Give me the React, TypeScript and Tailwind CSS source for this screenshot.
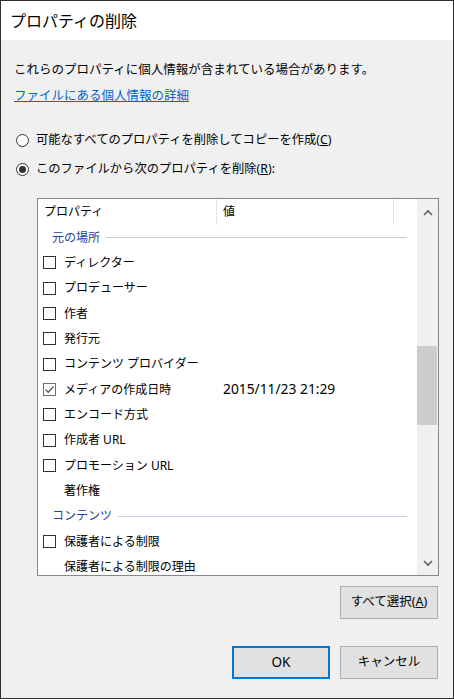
import React from 'react';

const FONT = "font-['Noto_Sans','Noto_Sans_CJK_JP',sans-serif]";

type Row =
  | { kind: 'group'; label: string }
  | { kind: 'item'; label: string; value?: string; checked?: boolean; noBox?: boolean };

const ROWS: Row[] = [
  { kind: 'group', label: '元の場所' },
  { kind: 'item', label: 'ディレクター' },
  { kind: 'item', label: 'プロデューサー' },
  { kind: 'item', label: '作者' },
  { kind: 'item', label: '発行元' },
  { kind: 'item', label: 'コンテンツ プロバイダー' },
  { kind: 'item', label: 'メディアの作成日時', value: '2015/11/23 21:29', checked: true },
  { kind: 'item', label: 'エンコード方式' },
  { kind: 'item', label: '作成者 URL' },
  { kind: 'item', label: 'プロモーション URL' },
  { kind: 'item', label: '著作権', noBox: true },
  { kind: 'group', label: 'コンテンツ' },
  { kind: 'item', label: '保護者による制限' },
  { kind: 'item', label: '保護者による制限の理由', noBox: true },
];

function CheckBox({ checked }: { checked?: boolean }) {
  return (
    <span
      className={`w-[13px] h-[13px] shrink-0 border bg-white flex items-center justify-center ${
        checked ? 'border-[#6d6d6d]' : 'border-[#333333]'
      }`}
    >
      {checked && (
        <svg width="11" height="11" viewBox="0 0 11 11">
          <polyline points="1.5,5.5 4.2,8.2 9.5,2.5" fill="none" stroke="#5a5a5a" strokeWidth="1.3" />
        </svg>
      )}
    </span>
  );
}

function Radio({ checked }: { checked?: boolean }) {
  return (
    <span className="w-[13px] h-[13px] shrink-0 rounded-full border border-[#333333] bg-white flex items-center justify-center">
      {checked && <span className="w-[7px] h-[7px] rounded-full bg-[#333333]" />}
    </span>
  );
}

function Chevron({ up }: { up?: boolean }) {
  return (
    <svg width="10" height="7" viewBox="0 0 10 7">
      <polyline
        points={up ? '1,6 5,2 9,6' : '1,1 5,5 9,1'}
        fill="none"
        stroke="#606060"
        strokeWidth="1.6"
      />
    </svg>
  );
}

export default function App() {
  return (
    <div className={`w-[454px] h-[699px] bg-[#f0f0f0] border border-[#2f2f2f] flex flex-col text-[12px] text-black ${FONT}`}>
      {/* Title */}
      <div className="h-[39px] bg-white flex items-center pl-[9px] text-[16px] leading-none shrink-0">
        プロパティの削除
      </div>

      <div className="flex flex-col px-[13px]">
        <p className="mt-[21px] leading-[18px] text-[12.5px]">これらのプロパティに個人情報が含まれている場合があります。</p>
        <a className="mt-[8px] leading-[18px] text-[12.5px] text-[#0066cc] underline self-start">ファイルにある個人情報の詳細</a>

        {/* Radios */}
        <div className="mt-[26px] flex items-center gap-[7px] pl-[2px] leading-[18px] text-[12.3px]">
          <Radio />
          <span>
            可能なすべてのプロパティを削除してコピーを作成(<span className="underline">C</span>)
          </span>
        </div>
        <div className="mt-[11px] flex items-center gap-[7px] pl-[2px] leading-[18px] text-[12.3px]">
          <Radio checked />
          <span>
            このファイルから次のプロパティを削除(<span className="underline">R</span>):
          </span>
        </div>

        {/* List box */}
        <div className="mt-[20px] ml-[23px] w-[402px] h-[378px] border border-[#828790] bg-white flex">
          <div className="flex-1 flex flex-col overflow-hidden">
            {/* Header */}
            <div className="h-[26px] shrink-0 flex items-stretch">
              <div className="w-[179px] flex items-center pl-[6px] border-r border-[#e5e5e5]">プロパティ</div>
              <div className="w-[177px] flex items-center pl-[6px] border-r border-[#e5e5e5]">値</div>
              <div className="flex-1" />
            </div>
            {ROWS.map((r, i) =>
              r.kind === 'group' ? (
                <div key={i} className="h-[25.33px] shrink-0 flex items-center pl-[14px] pr-[10px]">
                  <span className="text-[#1e3f95]">{r.label}</span>
                  <span className="flex-1 h-px ml-[6px] bg-[#c2cde4]" />
                </div>
              ) : (
                <div key={i} className="h-[25.33px] shrink-0 flex items-center">
                  <div className="w-[179px] flex items-center pl-[5px]">
                    {r.noBox ? <span className="w-[13px] shrink-0" /> : <CheckBox checked={r.checked} />}
                    <span className="ml-[8px] whitespace-nowrap">{r.label}</span>
                  </div>
                  {r.value && <span className="pl-[6px] whitespace-nowrap text-[13.8px]">{r.value}</span>}
                </div>
              )
            )}
          </div>
          {/* Scrollbar */}
          <div className="w-[21px] bg-[#f0f0f0] flex flex-col items-center">
            <div className="h-[24px] w-full flex items-center justify-center mt-[1px]">
              <Chevron up />
            </div>
            <div className="flex-1 w-full relative">
              <div className="absolute left-0 w-[20px] top-[122px] h-[79px] bg-[#cdcdcd]" />
            </div>
            <div className="h-[24px] w-full flex items-center justify-center">
              <Chevron />
            </div>
          </div>
        </div>

        {/* Buttons */}
        <div className="mt-[10px] flex justify-end pr-[2px]">
          <button className="w-[98px] h-[33px] bg-[#e1e1e1] border border-[#adadad] text-[12.5px]">
            すべて選択(<span className="underline">A</span>)
          </button>
        </div>
        <div className="mt-[27px] flex justify-end gap-[10px] pr-[2px]">
          <button className="w-[98px] h-[33px] bg-[#e1e1e1] border-2 border-[#0078d7] text-[13.5px]">OK</button>
          <button className="w-[98px] h-[33px] bg-[#e1e1e1] border border-[#adadad] text-[12.5px]">キャンセル</button>
        </div>
      </div>
    </div>
  );
}
